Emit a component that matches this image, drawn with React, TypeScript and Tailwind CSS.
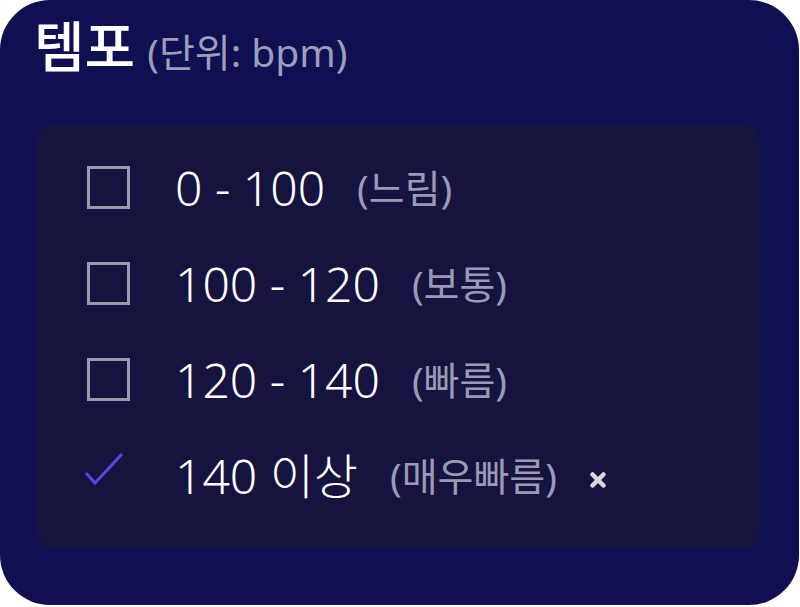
import { X } from "lucide-react";

const rows = [
  { range: "0 - 100", label: "(느림)", checked: false },
  { range: "100 - 120", label: "(보통)", checked: false },
  { range: "120 - 140", label: "(빠름)", checked: false },
  { range: "140 이상", label: "(매우빠름)", checked: true },
];

const font = { fontFamily: '"Noto Sans", "Noto Sans CJK KR", sans-serif' };

export default function App() {
  return (
    <div className="h-[607px] w-[800px] bg-white" style={font}>
      <div className="flex h-[605px] w-[799px] flex-col rounded-[50px] bg-[#0f0f52] pl-[34px] pr-[39px] pt-[14px]">
        <div className="flex items-baseline">
          <span className="text-[55px] font-medium leading-[64px] text-white">템포</span>
          <span className="ml-[12px] text-[39px] text-[#9c9cbc]">(단위: bpm)</span>
        </div>
        <div className="ml-[3px] mt-[43px] flex h-[423px] flex-col rounded-[14px] bg-[#16133f] pl-[50px] pt-[15px]">
          {rows.map((r) => (
            <div key={r.range} className="flex h-[96px] items-center">
              {r.checked ? (
                <svg width="43" height="43" viewBox="0 0 43 43" className="-ml-[3px] -mt-[10px]">
                  <path d="M2 24 L11 34 L38 5" fill="none" stroke="#5b45e0" strokeWidth="3" />
                </svg>
              ) : (
                <span className="box-border h-[43px] w-[43px] border-[3px] border-[#9a9aa8]" />
              )}
              <span className={"text-[48px] font-light leading-none text-white " + (r.checked ? "ml-[48px]" : "ml-[45px]")}>
                {r.range}
              </span>
              <span className="ml-[32px] text-[39px] leading-none text-[#9a9ab4]">{r.label}</span>
              {r.checked && (
                <X className="ml-[30px] mt-[8px] h-[22px] w-[22px] text-[#d6d6dc]" strokeWidth={5} />
              )}
            </div>
          ))}
        </div>
      </div>
    </div>
  );
}
